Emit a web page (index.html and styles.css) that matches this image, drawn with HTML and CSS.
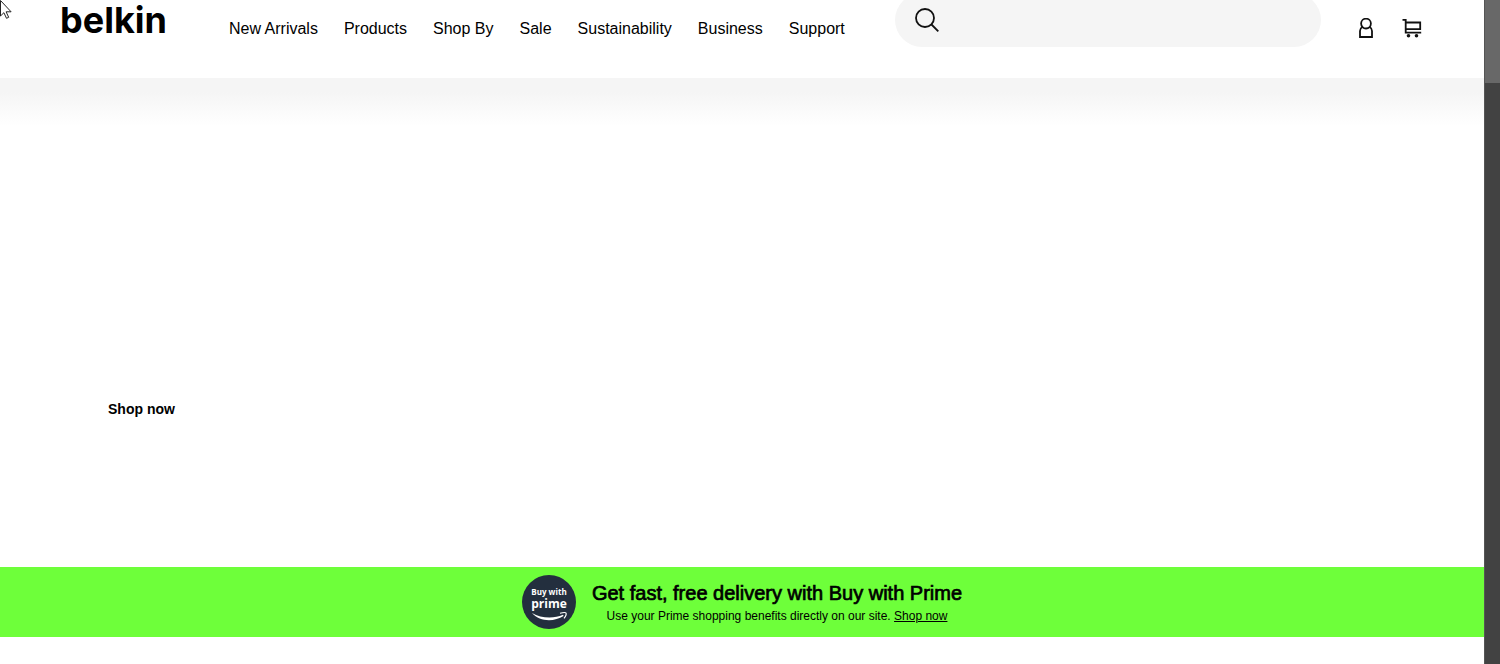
FILE: index.html
```html
<!DOCTYPE html>
<html lang="en">
<head>
    <meta charset="UTF-8">
    <meta name="viewport" content="width=device-width, initial-scale=1.0">
    <title>Belkin</title>
    <link rel="stylesheet" href="styles.css">
</head>
<body>
    <div class="page">
        <header class="header">
            <a class="logo" href="#">belkin</a>
            <nav class="nav">
                <a href="#">New Arrivals</a>
                <a href="#">Products</a>
                <a href="#">Shop By</a>
                <a href="#">Sale</a>
                <a href="#">Sustainability</a>
                <a href="#">Business</a>
                <a href="#">Support</a>
            </nav>
            <form class="search">
                <button type="submit" aria-label="Search">
                    <svg width="24" height="24" viewBox="0 0 24 24" fill="none" stroke="#111" stroke-width="1.8">
                        <circle cx="10" cy="10" r="9"/>
                        <path d="M16.5 16.5L23.3 23.3"/>
                    </svg>
                </button>
                <input type="text" aria-label="Search products">
            </form>
            <div class="actions">
                <a href="#" aria-label="Account">
                    <svg width="14" height="20" viewBox="0 0 14 20" fill="none" stroke="#111" stroke-width="1.8">
                        <circle cx="7" cy="5.6" r="4.9"/>
                        <path d="M3.3 9C1.6 10 1 11.3 1 13v6h12v-6c0-1.7-.6-3-2.3-4"/>
                    </svg>
                </a>
                <a href="#" aria-label="Cart">
                    <svg width="20" height="20" viewBox="0 0 20 20" fill="none" stroke="#111" stroke-width="1.8">
                        <path d="M.5 1.9h3.2v12.8h15.5M3.7 4.5h14.5v6.7H3.7"/>
                        <circle cx="6.5" cy="17.8" r="1.8" fill="#111" stroke="none"/>
                        <circle cx="14.5" cy="17.8" r="1.8" fill="#111" stroke="none"/>
                    </svg>
                </a>
            </div>
        </header>

        <main class="hero">
            <a href="#">Shop now</a>
        </main>

        <section class="promo">
            <svg class="prime-badge" width="54" height="54" viewBox="0 0 54 54">
                <circle cx="27" cy="27" r="27" fill="#232f3e"/>
                <text class="badge-small" x="27" y="20">Buy with</text>
                <text class="badge-large" x="27" y="33">prime</text>
                <path d="M10 38C19 43.5 32 44 41 39.8l.6 1.2C32 47 18 47 10 38z" fill="#fff"/>
                <path d="M38 38.3C41 37.4 43.5 37.3 44 38c.4 1-.5 3.6-2 5.4" fill="none" stroke="#fff" stroke-width="1.2"/>
            </svg>
            <div class="promo-text">
                <h2>Get fast, free delivery with Buy with Prime</h2>
                <p>Use your Prime shopping benefits directly on our site. <a href="#">Shop now</a></p>
            </div>
        </section>
    </div>

    <div class="scrollbar">
        <div class="thumb"></div>
    </div>

    <svg class="cursor" width="12" height="20" viewBox="0 0 12 20" fill="#fff" stroke="#222" stroke-width="1">
        <path d="M.5 .5v15.5l3.4-3.3 2.6 5.6 2.2-1-2.6-5.5h5z"/>
    </svg>
</body>
</html>
```

FILE: styles.css
```css
* {
    box-sizing: border-box;
}
body {
    margin: 0;
    min-height: 100vh;
    display: flex;
    font-family: 'Liberation Sans', Arial, sans-serif;
    color: #000;
    background-color: #fff;
}
a {
    color: inherit;
    text-decoration: none;
}
.page {
    flex: 1;
    display: flex;
    flex-direction: column;
    padding-bottom: 27px;
}

/* Header */
.header {
    display: flex;
    align-items: flex-start;
    height: 78px;
    padding: 0 62px 0 60px;
}
.logo {
    width: 169px;
    font-family: Inter, sans-serif;
    font-size: 36px;
    font-weight: 700;
    line-height: 40px;
}
.nav {
    display: flex;
    gap: 26px;
    padding-top: 19px;
    font-size: 16px;
    line-height: 20px;
    white-space: nowrap;
}
.search {
    flex: 1;
    display: flex;
    align-items: center;
    height: 54px;
    margin: -7px 38px 0 50px;
    padding: 0 20px;
    background-color: #f5f5f5;
    border-radius: 27px;
}
.search button {
    display: flex;
    padding: 0;
    border: none;
    background: none;
    cursor: pointer;
}
.search input {
    flex: 1;
    min-width: 0;
    padding: 0 12px;
    border: none;
    outline: none;
    background: none;
    font-size: 16px;
}
.actions {
    display: flex;
    gap: 29px;
    padding-top: 18px;
}
.actions svg {
    display: block;
}

/* Hero */
.hero {
    flex: 1;
    padding: 320px 108px 40px;
    background: linear-gradient(#f5f5f5, #f5f5f5 14px, #fff 48px);
    font-size: 14px;
    font-weight: bold;
    line-height: 22px;
}

/* Prime banner */
.promo {
    display: flex;
    justify-content: center;
    align-items: center;
    gap: 16px;
    height: 70px;
    background-color: #6eff3a;
}
.promo-text {
    padding-top: 2px;
    text-align: center;
}
.promo h2 {
    margin: 0;
    font-size: 20px;
    font-weight: normal;
    line-height: 26px;
    -webkit-text-stroke: 0.7px #000;
}
.promo p {
    margin: 0;
    font-size: 12px;
    line-height: 20px;
}
.promo p a {
    text-decoration: underline;
}
.prime-badge text {
    fill: #fff;
    font-family: 'Open Sans', sans-serif;
    font-weight: bold;
    text-anchor: middle;
}
.prime-badge .badge-small {
    font-size: 8px;
}
.prime-badge .badge-large {
    font-size: 12px;
}

/* Scrollbar */
.scrollbar {
    width: 16px;
    background-color: #424242;
    border-left: 1px solid #555;
}
.thumb {
    height: 83px;
    background-color: #686868;
}

.cursor {
    position: absolute;
    top: 0;
    left: 0;
}
```
